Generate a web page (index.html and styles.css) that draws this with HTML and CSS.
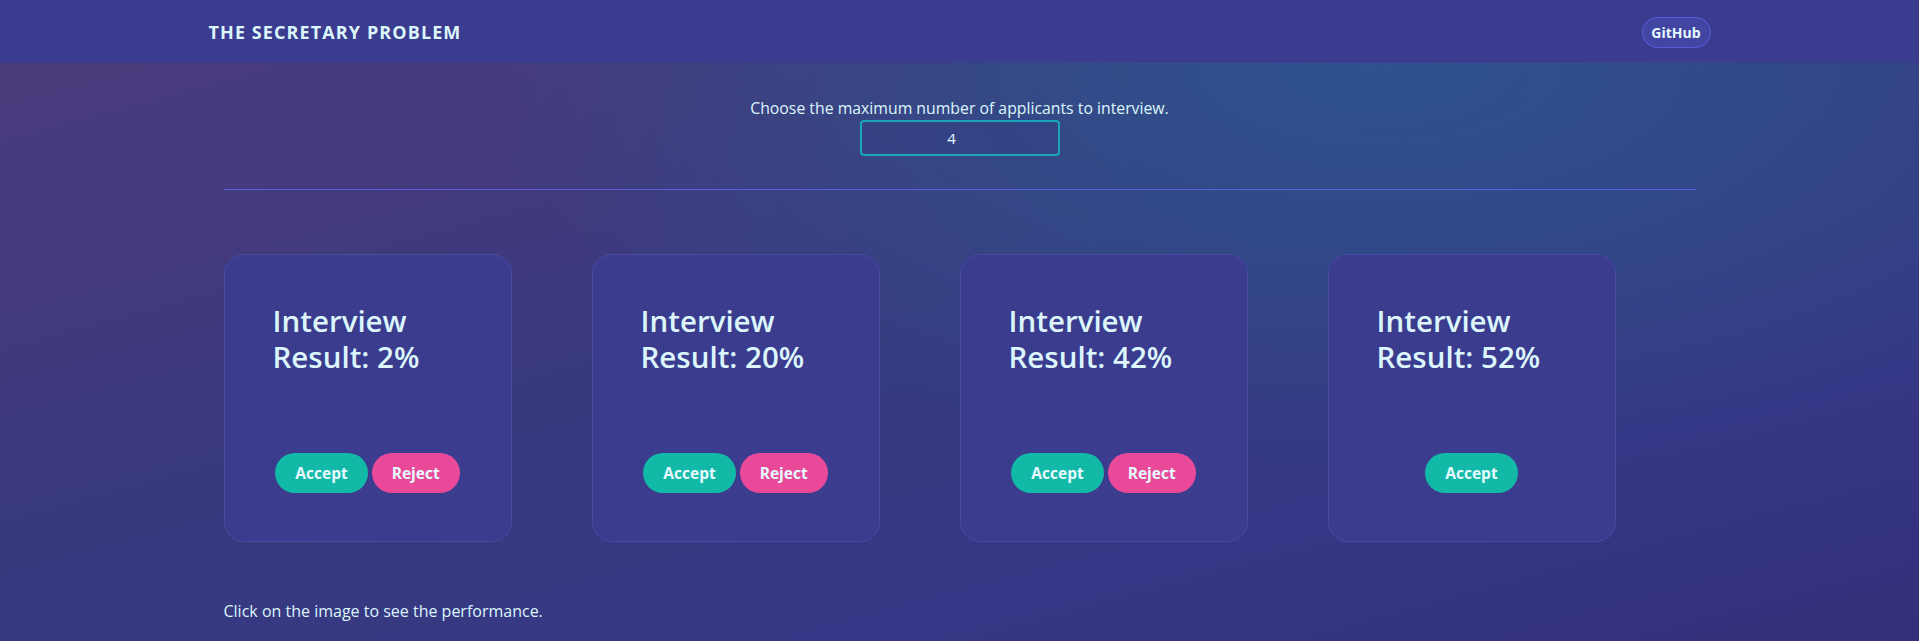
FILE: index.html
```html
<!DOCTYPE html>
<html lang="en">
<head>
<meta charset="utf-8">
<title>The Secretary Problem</title>
<link rel="stylesheet" href="styles.css">
</head>
<body>
<header class="nav">
  <div class="nav-inner">
    <div class="brand">THE SECRETARY PROBLEM</div>
    <a class="gh-btn" href="#">GitHub</a>
  </div>
</header>
<main class="container">
  <section class="picker">
    <p class="picker-label">Choose the maximum number of applicants to interview.</p>
    <input class="picker-input" type="text" value="4">
  </section>
  <hr class="divider">
  <section class="cards">
    <div class="card">
      <h2 class="card-title">Interview Result: 2%</h2>
      <div class="actions"><button class="btn btn-accept">Accept</button><button class="btn btn-reject">Reject</button></div>
    </div>
    <div class="card">
      <h2 class="card-title">Interview Result: 20%</h2>
      <div class="actions"><button class="btn btn-accept">Accept</button><button class="btn btn-reject">Reject</button></div>
    </div>
    <div class="card">
      <h2 class="card-title">Interview Result: 42%</h2>
      <div class="actions"><button class="btn btn-accept">Accept</button><button class="btn btn-reject">Reject</button></div>
    </div>
    <div class="card">
      <h2 class="card-title">Interview Result: 52%</h2>
      <div class="actions"><button class="btn btn-accept">Accept</button></div>
    </div>
  </section>
  <p class="hint">Click on the image to see the performance.</p>
</main>
</body>
</html>
```

FILE: styles.css
```css
* { box-sizing: border-box; }

html, body { margin: 0; padding: 0; }

body {
  min-height: 641px;
  font-family: "Open Sans", "Noto Sans", sans-serif;
  color: #dcf6fb;
  background:
    radial-gradient(ellipse 900px 420px at 1380px 60px, rgba(44, 84, 142, 0.95) 0%, rgba(44, 84, 142, 0.55) 45%, rgba(44, 84, 142, 0) 100%),
    linear-gradient(165deg, #4c3b7c 0%, #433a7c 25%, #373a7e 50%, #363786 75%, #33307a 100%);
}

.nav {
  background: #3b3c8f;
  height: 63px;
}

.nav-inner {
  max-width: 1502px;
  height: 63px;
  margin: 0 auto;
  display: flex;
  align-items: center;
  justify-content: space-between;
}

.brand {
  font-size: 18px;
  font-weight: 700;
  letter-spacing: 1.1px;
  color: #dcf6fb;
}

.gh-btn {
  display: inline-flex;
  align-items: center;
  justify-content: center;
  width: 69px;
  height: 31px;
  border: 1px solid #5a5ce0;
  border-radius: 16px;
  background: #4245a2;
  color: #e6fbff;
  font-size: 14px;
  font-weight: 700;
  text-decoration: none;
  margin-top: 1px;
}

.container {
  width: 1472px;
  margin: 0 auto;
}

.picker {
  text-align: center;
  padding-top: 34px;
}

.picker-label {
  margin: 0;
  font-size: 15.8px;
  line-height: 23px;
}

.picker-input {
  display: block;
  margin: 0 auto;
  width: 200px;
  height: 36px;
  padding: 0 16px 0 0;
  border: 2px solid #1aa6b8;
  border-radius: 4px;
  background: rgba(50, 60, 130, 0.35);
  color: #e6fbff;
  text-align: center;
  font-family: inherit;
  font-size: 15px;
}

.divider {
  margin: 33px 0 0;
  border: 0;
  height: 1px;
  background: #5a5ee2;
}

.cards {
  display: flex;
  gap: 80px;
  margin-top: 64px;
}

.card {
  width: 288px;
  height: 288px;
  padding: 48px;
  border: 1px solid #474aa3;
  border-radius: 20px;
  background: #3b3c8e;
  display: flex;
  flex-direction: column;
  justify-content: space-between;
}

.card-title {
  margin: 0;
  font-size: 29.5px;
  line-height: 36px;
  font-weight: 600;
  color: #dcf6fb;
}

.actions {
  display: flex;
  justify-content: center;
  gap: 4px;
}

.btn {
  height: 40px;
  padding: 0 20px;
  border: 0;
  border-radius: 20px;
  font-family: inherit;
  font-size: 15.5px;
  font-weight: 700;
  color: #e6fbff;
  cursor: pointer;
}

.btn-accept { background: #13b9a7; }
.btn-reject { background: #ea4899; }

.hint {
  margin: 57px 0 0;
  font-size: 16px;
  line-height: 24px;
}
```
